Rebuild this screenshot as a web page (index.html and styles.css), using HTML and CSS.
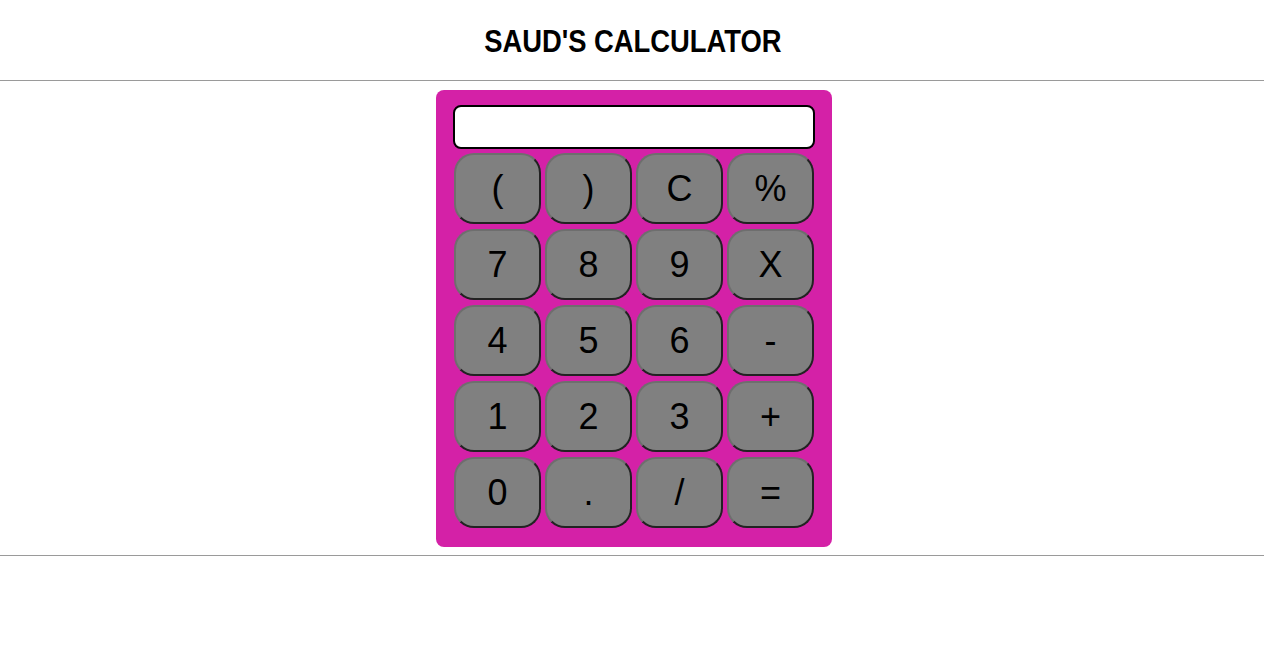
FILE: index.html
```html
<!DOCTYPE html>
<html>
<head>
<meta charset="utf-8">
<title>Saud's Calculator</title>
<link rel="stylesheet" href="styles.css">
</head>
<body>
<header class="header"><h1 class="title">SAUD'S CALCULATOR</h1></header>
<hr class="rule">
<main class="main">
  <div class="calc">
    <input class="display" type="text">
    <div class="keys">
      <button class="key">(</button>
      <button class="key">)</button>
      <button class="key">C</button>
      <button class="key">%</button>
      <button class="key">7</button>
      <button class="key">8</button>
      <button class="key">9</button>
      <button class="key">X</button>
      <button class="key">4</button>
      <button class="key">5</button>
      <button class="key">6</button>
      <button class="key">-</button>
      <button class="key">1</button>
      <button class="key">2</button>
      <button class="key">3</button>
      <button class="key">+</button>
      <button class="key">0</button>
      <button class="key">.</button>
      <button class="key">/</button>
      <button class="key">=</button>
    </div>
  </div>
</main>
<hr class="rule">
</body>
</html>
```
FILE: styles.css
```css
html, body {
  margin: 0;
  padding: 0;
  background: #fff;
}
.header {
  height: 80px;
  display: flex;
  align-items: center;
  justify-content: center;
  padding-left: 2px;
  box-sizing: border-box;
}
.title {
  margin: 0;
  font-family: "Liberation Sans", Arial, sans-serif;
  font-weight: bold;
  font-size: 32px;
  color: #000;
  padding-top: 3px;
  transform: scaleX(0.855);
  white-space: nowrap;
}
.rule {
  margin: 0;
  border: 0;
  border-top: 1px solid #9a9a9a;
  height: 0;
}
.main {
  display: flex;
  justify-content: center;
  padding: 9px 0 8px 4px;
}
.calc {
  width: 396px;
  box-sizing: border-box;
  background: #d421a7;
  border-radius: 8px;
  padding: 15px 17px 19px 17px;
  display: flex;
  flex-direction: column;
  gap: 4px;
}
.display {
  box-sizing: border-box;
  width: 362px;
  height: 44px;
  margin: 0;
  border: 2px solid #000;
  border-radius: 8px;
  background: #fff;
  font-family: "Liberation Sans", Arial, sans-serif;
  font-size: 24px;
}
.keys {
  display: grid;
  grid-template-columns: repeat(4, 87px);
  grid-auto-rows: 71px;
  column-gap: 4px;
  row-gap: 5px;
  padding-left: 1px;
}
.key {
  box-sizing: border-box;
  margin: 0;
  background: #808080;
  border: 2px solid;
  border-color: #6e6e6e #222 #222 #6e6e6e;
  border-radius: 20px;
  font-family: "Liberation Sans", Arial, sans-serif;
  font-size: 36px;
  color: #000;
  padding: 0;
}
```
